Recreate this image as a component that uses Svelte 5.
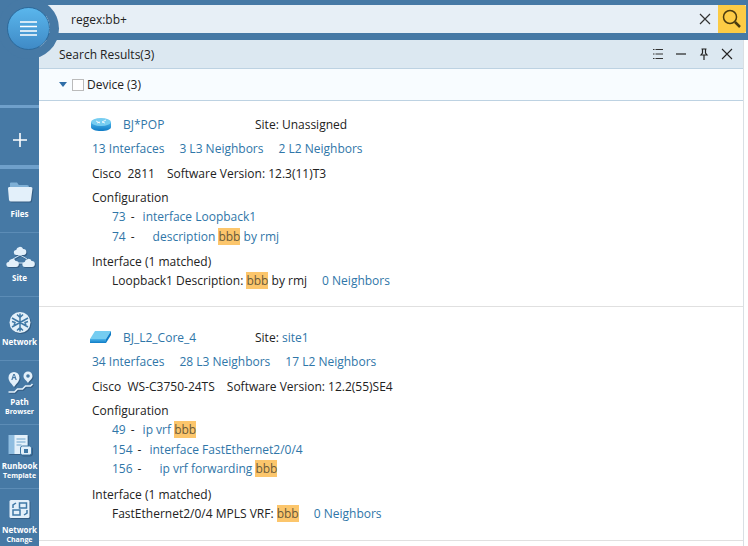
<script>
  const navItems = [
    { id: 'files', label: 'Files' },
    { id: 'site', label: 'Site' },
    { id: 'network', label: 'Network' },
    { id: 'path', label: 'Path', sub: 'Browser' },
    { id: 'runbook', label: 'Runbook', sub: 'Template' },
    { id: 'change', label: 'Network', sub: 'Change' }
  ];

  // one cloud, 12 wide and 8 high, used three times by the Site icon
  const cloud = 'M2.500 8a2.500 2.500 0 0 1-.3-5 3.700 3.700 0 0 1 7-1 3 3 0 0 1 .3 6z';

  const devices = [
    {
      name: 'BJ*POP',
      icon: 'router',
      site: 'Unassigned',
      stats: ['13 Interfaces', '3 L3 Neighbors', '2 L2 Neighbors'],
      vendor: 'Cisco  2811',
      version: '12.3(11)T3',
      config: [
        { line: 73, pre: 'interface Loopback1', hit: '', post: '', indent: 0 },
        { line: 74, pre: 'description ', hit: 'bbb', post: ' by rmj', indent: 1 }
      ],
      ifPre: 'Loopback1 Description: ',
      ifPost: ' by rmj',
      neighbors: '0 Neighbors'
    },
    {
      name: 'BJ_L2_Core_4',
      icon: 'switch',
      site: 'site1',
      stats: ['34 Interfaces', '28 L3 Neighbors', '17 L2 Neighbors'],
      vendor: 'Cisco  WS-C3750-24TS',
      version: '12.2(55)SE4',
      config: [
        { line: 49, pre: 'ip vrf ', hit: 'bbb', post: '', indent: 0 },
        { line: 154, pre: 'interface FastEthernet2/0/4', hit: '', post: '', indent: 0 },
        { line: 156, pre: 'ip vrf forwarding ', hit: 'bbb', post: '', indent: 1 }
      ],
      ifPre: 'FastEthernet2/0/4 MPLS VRF: ',
      ifPost: '',
      neighbors: '0 Neighbors'
    }
  ];
</script>

<div class="app">
  <aside class="rail">
    <div class="rail-top"></div>
    <button class="add" aria-label="Add">
      <svg width="16" height="16" viewBox="0 0 16 16"><path d="M8 1v14M1 8h14" stroke="#fff" stroke-width="1.6" fill="none" /></svg>
    </button>
    {#each navItems as item}
      <div class="nav-item" class:has-sub={item.sub}>
        <svg class="nav-icon" width="30" height="30" viewBox="0 0 30 30">
          {#if item.id === 'files'}
            <path d="M5 9V6.500q0-1 1-1h6l2 2.500h8q2 0 2 2V11H5z" fill="#7fb0d6" />
            <path d="M4 10h22q1.500 0 1.500 1.500L26 23q0 1.500-2 1.500H6q-1.500 0-2-1.500L3 11.500Q3 10 4 10z" fill="#e3f0fa" />
          {:else if item.id === 'site'}
            <path d="M15 14L8 18M15 14l7 4M12 22h6" stroke="#cfe3f3" stroke-width="1" fill="none" />
            <path d={cloud} transform="translate(9 6)" fill="#e3f0fa" />
            <path d={cloud} transform="translate(1.500 18)" fill="#e3f0fa" />
            <path d={cloud} transform="translate(17.500 18)" fill="#e3f0fa" />
          {:else if item.id === 'network'}
            <g transform="translate(0 2.500)">
              <circle cx="15" cy="15" r="10.500" fill="#e3f0fa" />
              <path d="M15 6v18M7 10.500l16 9M23 10.500l-16 9M12 7l3 3 3-3M12 23l3-3 3 3M7 14l3 1-1 3M23 14l-3 1 1 3" stroke="#3f78a6" stroke-width="1.500" fill="none" />
            </g>
          {:else if item.id === 'path'}
            <path d="M9 22c-3.500-4.500-5.500-6-5.500-9.500a5.500 5.500 0 0 1 11 0c0 3.500-2 5-5.500 9.500z" fill="#e3f0fa" />
            <text class="pin-letter" x="9" y="15" text-anchor="middle">A</text>
            <path d="M23 18c-2.500-3.500-4.500-4.500-4.500-7a4.500 4.500 0 0 1 9 0c0 2.500-2 3.500-4.500 7z" fill="#e3f0fa" />
            <circle cx="23" cy="11" r="1.800" fill="#4679a5" />
            <path d="M3.500 27h6l3-3h5l3-3h5l2-2" stroke="#e3f0fa" stroke-width="1.500" fill="none" />
          {:else if item.id === 'runbook'}
            <path d="M3.500 6h19v19h-19z" fill="#8fbde0" />
            <path d="M9.500 6h13v19h-13z" fill="#e3f0fa" />
            <path d="M11.500 10h9M11.500 13h9M11.500 16h5" stroke="#6fa3cc" stroke-width="1.200" />
            <rect x="15.500" y="17" width="11" height="9" rx="2" fill="#e3f0fa" stroke="#3f78a6" />
            <rect x="19" y="20" width="4" height="4" fill="#3f78a6" />
          {:else}
            <rect x="4.500" y="7" width="20" height="18" rx="1.500" fill="#e3f0fa" />
            <rect x="14.500" y="10" width="7" height="5" fill="none" stroke="#3f78a6" stroke-width="1.500" />
            <rect x="8" y="17" width="7" height="5" fill="none" stroke="#3f78a6" stroke-width="1.500" />
            <path d="M8 15v-3l3-2M22 17v3l-3 2" fill="none" stroke="#3f78a6" stroke-width="1.500" />
          {/if}
        </svg>
        <span class="nav-label">{item.label}</span>
        {#if item.sub}<span class="nav-sub">{item.sub}</span>{/if}
      </div>
    {/each}
  </aside>

  <div class="main">
    <div class="topbar">
      <div class="search">
        <span class="query">regex:bb+</span>
        <svg class="clear" width="14" height="14" viewBox="0 0 14 14"><path d="M2 2l10 10M12 2L2 12" stroke="#333" stroke-width="1.200" fill="none" /></svg>
        <div class="go">
          <svg width="22" height="22" viewBox="0 0 22 22">
            <circle cx="9" cy="9" r="6.500" fill="none" stroke="#4a3b10" stroke-width="1.500" />
            <path d="M14 14l5 5" stroke="#4a3b10" stroke-width="2.500" />
          </svg>
        </div>
      </div>
    </div>

    <section class="panel">
      <header class="panel-head">
        <span class="panel-title">Search Results(3)</span>
        <div class="panel-tools">
          <svg width="12" height="12" viewBox="0 0 12 12"><path d="M3.500 1.500H11M3.500 6H11M3.500 10.500H11M1 1.500h1.500M1 6h1.500M1 10.500h1.500" stroke="#333" fill="none" /></svg>
          <svg width="12" height="12" viewBox="0 0 12 12"><path d="M1 6h10" stroke="#222" stroke-width="1.200" fill="none" /></svg>
          <svg width="12" height="12" viewBox="0 0 12 12"><path d="M3.500 1h5M4.500 1v4L3 7h6L7.500 5V1M6 7v5" stroke="#222" stroke-width="1.200" fill="none" /></svg>
          <svg width="12" height="12" viewBox="0 0 12 12"><path d="M1 1l10 10M11 1L1 11" stroke="#222" stroke-width="1.100" fill="none" /></svg>
        </div>
      </header>

      <div class="group-row">
        <span class="caret"></span>
        <span class="check"></span>
        <span>Device (3)</span>
      </div>

      {#each devices as d}
        <article class="device">
          <div class="dev-head">
            <svg class="dev-icon" width="22" height="16" viewBox="0 0 22 16">
              <defs>
                <linearGradient id="dev-{d.icon}" x1="0" y1="0" x2="0" y2="1">
                  <stop offset="0" stop-color="#4db4ea" />
                  <stop offset="1" stop-color="#0f7cc6" />
                </linearGradient>
              </defs>
              {#if d.icon === 'router'}
                <path d="M1 5v5c0 2.500 4.500 4 10 4s10-1.500 10-4V5z" fill="url(#dev-router)" />
                <ellipse cx="11" cy="5" rx="10" ry="4" fill="#76cdf1" />
                <path d="M6 4l4 2M16 3l-4 2M7 6l3-1M15 6l-3-1" stroke="#fff" stroke-width="0.800" />
              {:else}
                <path d="M5 1h16l-5 8H0z" fill="#76cdf1" />
                <path d="M0 9h16v4H0z" fill="url(#dev-switch)" />
                <path d="M16 9l5-8v4l-5 8z" fill="#0f7cc6" />
              {/if}
            </svg>
            <a class="name">{d.name}</a>
            <span class="site">Site: <span class={d.site === 'site1' ? 'link' : ''}>{d.site}</span></span>
          </div>

          <div class="row stats">
            {#each d.stats as s}<a>{s}</a>{/each}
          </div>

          <div class="row specs">
            <span class="vendor">{d.vendor}</span>
            <span>Software Version: {d.version}</span>
          </div>

          <div class="row heading">Configuration</div>
          {#each d.config as c}
            <div class="row cfg">
              <span class="line">{c.line}</span>
              <span class="dash">-</span>
              <span class="code" class:indent={c.indent}>{c.pre}{#if c.hit}<mark>{c.hit}</mark>{/if}{c.post}</span>
            </div>
          {/each}

          <div class="row heading if-head">Interface (1 matched)</div>
          <div class="row cfg if-row">
            <span>{d.ifPre}<mark>bbb</mark>{d.ifPost}</span>
            <a class="nbrs">{d.neighbors}</a>
          </div>
        </article>
      {/each}
    </section>
  </div>

  <button class="menu" aria-label="Menu">
    <svg width="17" height="15" viewBox="0 0 17 15"><path d="M0 1h17M0 5.500h17M0 10h17M0 14h17" stroke="#fff" stroke-width="1.300" fill="none" /></svg>
  </button>
</div>

<style>
  :global(body) {
    margin: 0;
    overflow: hidden;
  }
  .app {
    position: relative;
    display: flex;
    width: 748px;
    height: 546px;
    overflow: hidden;
    background: #fff;
    font: 12px/17px "Open Sans", sans-serif;
    color: #222;
  }
  .menu {
    position: absolute;
    left: 7px;
    top: 7px;
    width: 43px;
    height: 43px;
    padding: 0;
    border: 1px solid #2c6a9c;
    border-radius: 50%;
    background: linear-gradient(#5ab6ec, #3f8ac6);
    box-shadow: 0 0 0 9px #4679a5;
    display: flex;
    align-items: center;
    justify-content: center;
  }
  .rail {
    flex: none;
    width: 39px;
    background: #4679a5;
    display: flex;
    flex-direction: column;
  }
  .rail-top {
    height: 105px;
    flex: none;
    border-bottom: 3px solid #6fa0cb;
  }
  .add {
    flex: none;
    height: 61px;
    padding: 7px 0 0;
    border: 0;
    border-bottom: 4px solid #6fa0cb;
    background: none;
    display: flex;
    align-items: center;
    justify-content: center;
  }
  .nav-item {
    flex: none;
    height: 55px;
    padding-top: 8px;
    border-bottom: 1px solid #5c8cb6;
    display: flex;
    flex-direction: column;
    align-items: center;
    color: #fff;
  }
  .has-sub {
    height: 59px;
    padding-top: 4px;
  }
  .nav-icon {
    flex: none;
    margin-bottom: 1px;
    overflow: visible;
    filter: drop-shadow(1px 1px 0 rgba(30, 60, 90, 0.45));
  }
  .pin-letter {
    font-size: 8px;
    font-weight: 700;
    fill: #4679a5;
  }
  .nav-label {
    font-size: 8px;
    line-height: 11px;
    font-weight: 700;
    white-space: nowrap;
  }
  .nav-sub {
    font-size: 7px;
    line-height: 9px;
    font-weight: 700;
    white-space: nowrap;
  }
  .main {
    flex: 1;
    min-width: 0;
    display: flex;
    flex-direction: column;
  }
  .topbar {
    flex: none;
    height: 40px;
    box-sizing: border-box;
    padding: 5px 2px 7px 7px;
    background: #4679a5;
  }
  .search {
    height: 28px;
    display: flex;
    align-items: center;
    background: #e7eff6;
  }
  .query {
    flex: 1;
    padding-left: 25px;
  }
  .clear {
    margin-right: 6px;
  }
  .go {
    width: 28px;
    height: 28px;
    background: #fccb45;
    border-radius: 0 2px 2px 0;
    display: flex;
    align-items: center;
    justify-content: center;
  }
  .panel {
    flex: 1;
    min-height: 0;
    width: 704px;
    border-right: 1px solid #d9dfe4;
  }
  .panel-head {
    height: 29px;
    box-sizing: border-box;
    padding: 0 10px 0 20px;
    display: flex;
    align-items: center;
    justify-content: space-between;
    background: #dce8f1;
    border-bottom: 1px solid #bdd2e2;
  }
  .panel-tools {
    display: flex;
    gap: 11px;
    align-items: center;
  }
  .group-row {
    height: 32px;
    box-sizing: border-box;
    padding-left: 20px;
    display: flex;
    align-items: center;
    background: #f8fcff;
    border-bottom: 1px solid #bdd2e2;
  }
  .caret {
    width: 0;
    height: 0;
    margin-right: 5px;
    border: 4px solid transparent;
    border-top: 5px solid #2f6ea8;
    border-bottom: 0;
  }
  .check {
    width: 10px;
    height: 10px;
    margin-right: 3px;
    border: 1px solid #bbb;
    background: #fff;
  }
  .device {
    padding: 15px 0 0 53px;
    border-bottom: 1px solid #e0e0e0;
    height: 206px;
    box-sizing: border-box;
  }
  .device + .device {
    height: 234px;
    padding-top: 22px;
  }
  .dev-head {
    display: flex;
    align-items: center;
    height: 17px;
  }
  .dev-icon {
    flex: none;
    margin-left: -2px;
    margin-right: 11px;
  }
  .name,
  .stats a,
  .nbrs,
  .link,
  .code,
  .line {
    color: #2f76a8;
  }
  .name {
    width: 132px;
    flex: none;
  }
  .row {
    display: flex;
    white-space: pre;
    height: 17px;
    margin-top: 7.400px;
  }
  .stats {
    gap: 15px;
  }
  .specs {
    gap: 12px;
  }
  .cfg {
    margin-top: 2.400px;
    padding-left: 20px;
  }
  .heading + .cfg {
    margin-top: 2px;
  }
  .dash {
    margin: 0 8px 0 5px;
  }
  .indent {
    padding-left: 10px;
  }
  .if-head {
    margin-top: 8.600px;
  }
  .heading + .if-row {
    margin-top: 2.200px;
  }
  .nbrs {
    margin-left: 15px;
  }
  mark {
    background: #fcc66c;
    color: #6a5a3a;
  }
</style>
